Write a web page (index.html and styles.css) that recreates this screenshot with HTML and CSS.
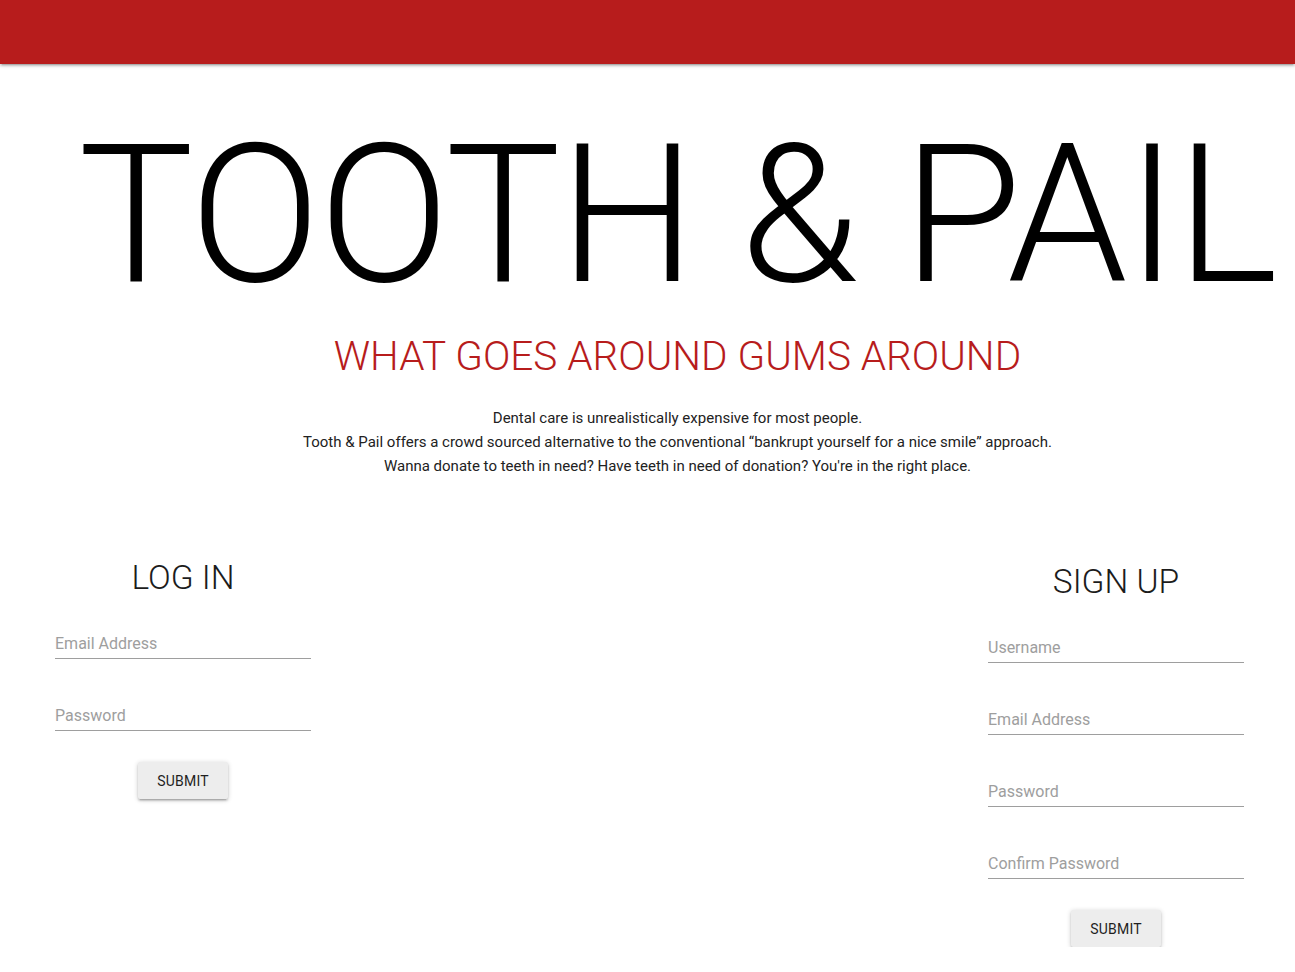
FILE: index.html
```html
<!DOCTYPE html>
<html lang="en">
<head>
<meta charset="utf-8">
<title>Tooth &amp; Pail</title>
<link rel="stylesheet" href="styles.css">
</head>
<body>
<header class="topbar"></header>
<main class="page">
  <section class="hero">
    <h1 class="title">TOOTH &amp; PAIL</h1>
    <h2 class="tagline">WHAT GOES AROUND GUMS AROUND</h2>
    <p class="intro">Dental care is unrealistically expensive for most people.<br>Tooth &amp; Pail offers a crowd sourced alternative to the conventional “bankrupt yourself for a nice smile” approach.<br>Wanna donate to teeth in need? Have teeth in need of donation? You're in the right place.</p>
  </section>
  <section class="forms">
    <form class="panel login">
      <h3 class="panel-title">LOG IN</h3>
      <div class="field"><input type="email" placeholder="Email Address"></div>
      <div class="field"><input type="password" placeholder="Password"></div>
      <div class="actions"><button type="button" class="btn">SUBMIT</button></div>
    </form>
    <form class="panel signup">
      <h3 class="panel-title">SIGN UP</h3>
      <div class="field"><input type="text" placeholder="Username"></div>
      <div class="field"><input type="email" placeholder="Email Address"></div>
      <div class="field"><input type="password" placeholder="Password"></div>
      <div class="field"><input type="password" placeholder="Confirm Password"></div>
      <div class="actions"><button type="button" class="btn">SUBMIT</button></div>
    </form>
  </section>
</main>
</body>
</html>
```

FILE: styles.css
```css
* { box-sizing: border-box; }
html, body { margin: 0; padding: 0; }
body {
  font-family: Roboto, "Liberation Sans", sans-serif;
  background: #fff;
  color: rgba(0,0,0,0.87);
  overflow-x: hidden;
}
.topbar {
  height: 64px;
  background: #b71c1c;
  box-shadow: 0 2px 2px 0 rgba(0,0,0,.14), 0 3px 1px -2px rgba(0,0,0,.12), 0 1px 5px 0 rgba(0,0,0,.2);
}
.hero {
  padding-left: 60px;
  text-align: center;
}
.title {
  margin: 55px 0 0;
  font-size: 193px;
  line-height: 193px;
  font-weight: 300;
  letter-spacing: -1.5px;
  color: #000;
  white-space: nowrap;
}
.tagline {
  margin: 24px 0 0;
  font-size: 40.5px;
  line-height: 40.5px;
  font-weight: 300;
  color: #b71c1c;
}
.intro {
  margin: 29.5px 0 0;
  font-size: 15px;
  line-height: 24px;
  color: #222;
}
.forms {
  display: flex;
  justify-content: space-between;
  align-items: flex-start;
  padding: 0 51px 0 55px;
  margin-top: 83px;
}
.panel {
  width: 256px;
  margin: 0;
}
.signup { margin-top: 4px; }
.panel-title {
  margin: 0;
  text-align: center;
  font-size: 33.5px;
  line-height: 33.5px;
  font-weight: 300;
  color: #1c1c1c;
}
.field { margin-top: 33.5px; }
.field + .field { margin-top: 41px; }
.field input {
  display: block;
  width: 100%;
  height: 31px;
  padding: 0;
  border: none;
  border-bottom: 1px solid #9e9e9e;
  outline: none;
  background: transparent;
  font-family: Roboto, "Liberation Sans", sans-serif;
  font-size: 16px;
  color: #333;
}
.field input::placeholder { color: #9e9e9e; opacity: 1; }
.actions {
  display: flex;
  justify-content: center;
  margin-top: 31px;
}
.btn {
  height: 37px;
  padding: 0 19px;
  border: none;
  border-radius: 2px;
  background: #ededed;
  color: #1f1f1f;
  font-family: Roboto, "Liberation Sans", sans-serif;
  font-size: 14px;
  font-weight: 400;
  letter-spacing: 0.2px;
  box-shadow: 0 2px 2px 0 rgba(0,0,0,.14), 0 3px 1px -2px rgba(0,0,0,.12), 0 1px 5px 0 rgba(0,0,0,.2);
  cursor: pointer;
}
```
